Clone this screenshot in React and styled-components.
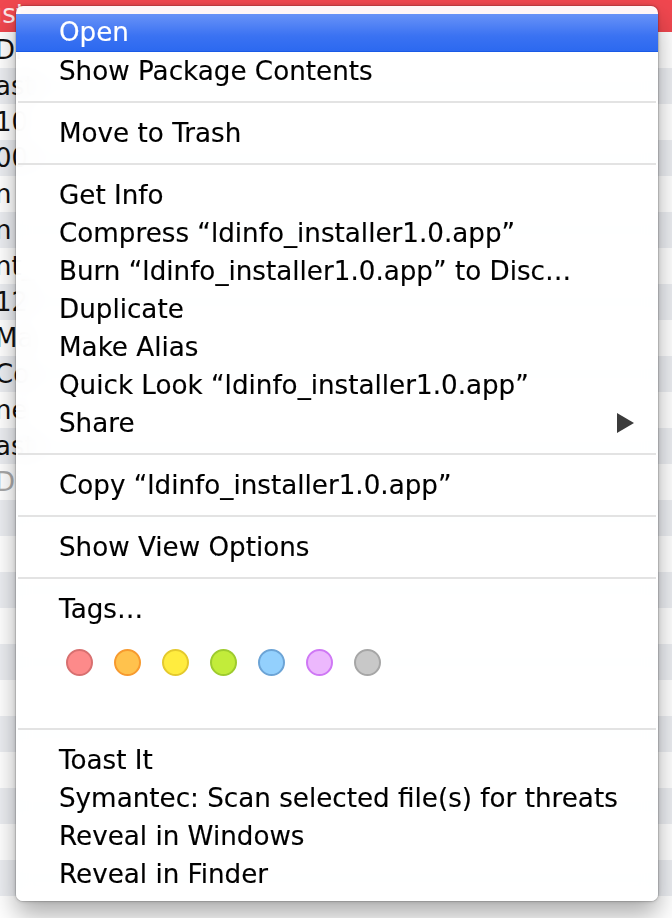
import { createGlobalStyle, styled } from "styled-components";

const GlobalStyle = createGlobalStyle`
  html, body {
    margin: 0;
    padding: 0;
    background: #fff;
    overflow: hidden;
  }
  body {
    font-family: "DejaVu Sans", "Liberation Sans", sans-serif;
  }
`;

const Page = styled.div`
  position: relative;
  width: 672px;
  height: 918px;
  overflow: hidden;
`;

const FileList = styled.div`
  margin-top: -4px;
  display: flex;
  flex-direction: column;
`;

const FileRow = styled.div`
  height: 36px;
  display: flex;
  align-items: center;
  background: ${(p) => (p.$selected ? "#f0474f" : p.$odd ? "#eceef2" : "#ffffff")};
  color: ${(p) => (p.$selected ? "#fde8ea" : p.$dim ? "#a8a8a8" : "#111")};
  font-size: 26px;
  white-space: nowrap;
`;

const FileName = styled.span`
  margin-left: -5px;
`;

const Menu = styled.div`
  position: absolute;
  left: 16px;
  top: 6px;
  width: 642px;
  box-sizing: border-box;
  padding: 8px 0;
  background: rgba(255, 255, 255, 0.95);
  backdrop-filter: blur(10px);
  border-radius: 7px;
  box-shadow: 0 0 0 1px rgba(0, 0, 0, 0.1), 0 0 4px rgba(0, 0, 0, 0.22),
    0 14px 26px rgba(0, 0, 0, 0.32);
  font-size: 26.2px;
  color: #000;
`;

const Item = styled.div`
  height: 38px;
  box-sizing: border-box;
  display: flex;
  align-items: center;
  justify-content: space-between;
  padding: 0 24px 1px 43px;
  white-space: nowrap;
  -webkit-text-stroke: 0.15px currentColor;
  ${(p) =>
    p.$active &&
    `
    color: #fff;
    background: linear-gradient(#6892f7, #3a72f2 60%, #2c69f0);
    border-bottom: 1px solid #1a5ae6;
  `}
`;

const Separator = styled.div`
  height: 2px;
  margin: 11px 2px;
  background: #e3e3e3;
`;

const TagRow = styled.div`
  height: 89px;
  box-sizing: border-box;
  display: flex;
  gap: 21px;
  padding: 21px 0 0 50px;
`;

const TagDot = styled.span`
  width: 27px;
  height: 27px;
  box-sizing: border-box;
  border-radius: 50%;
  background: ${(p) => p.$fill};
  border: 2px solid ${(p) => p.$edge};
`;

const Arrow = () => (
  <svg width="17" height="20" viewBox="0 0 17 20">
    <path d="M0 0 L17 10 L0 20 Z" fill="#3b3b3b" />
  </svg>
);

// only the slivers of the Finder list that peek out from under the menu
const files = [
  "ıst",
  "Di",
  "ast",
  "10",
  "00",
  "n",
  "n",
  "nt_",
  "12",
  "Ma",
  "Co",
  "ne",
  "ast",
  "Di",
];

const tags = [
  ["#fd8a8a", "#d87070"],
  ["#ffc24d", "#f79a2e"],
  ["#ffec3f", "#e4c92d"],
  ["#c2ec3a", "#9ecb2e"],
  ["#93d0fd", "#6ca4d6"],
  ["#ecb8fd", "#cf78f5"],
  ["#c8c8c8", "#a6a6a6"],
];

const app = "“ldinfo_installer1.0.app”";

export default function App() {
  const rows = Array.from({ length: 27 }, (_, i) => files[i] || "");

  return (
    <Page>
      <GlobalStyle />
      <FileList>
        {rows.map((name, i) => (
          <FileRow key={i} $selected={i === 0} $odd={i % 2 === 0} $dim={i === 13}>
            <FileName>{name}</FileName>
          </FileRow>
        ))}
      </FileList>

      <Menu>
        <Item $active>Open</Item>
        <Item>Show Package Contents</Item>
        <Separator />
        <Item>Move to Trash</Item>
        <Separator />
        <Item>Get Info</Item>
        <Item>Compress {app}</Item>
        <Item>Burn {app} to Disc…</Item>
        <Item>Duplicate</Item>
        <Item>Make Alias</Item>
        <Item>Quick Look {app}</Item>
        <Item>
          Share
          <Arrow />
        </Item>
        <Separator />
        <Item>Copy {app}</Item>
        <Separator />
        <Item>Show View Options</Item>
        <Separator />
        <Item>Tags…</Item>
        <TagRow>
          {tags.map(([fill, edge]) => (
            <TagDot key={fill} $fill={fill} $edge={edge} />
          ))}
        </TagRow>
        <Separator />
        <Item>Toast It</Item>
        <Item>Symantec: Scan selected file(s) for threats</Item>
        <Item>Reveal in Windows</Item>
        <Item>Reveal in Finder</Item>
      </Menu>
    </Page>
  );
}
